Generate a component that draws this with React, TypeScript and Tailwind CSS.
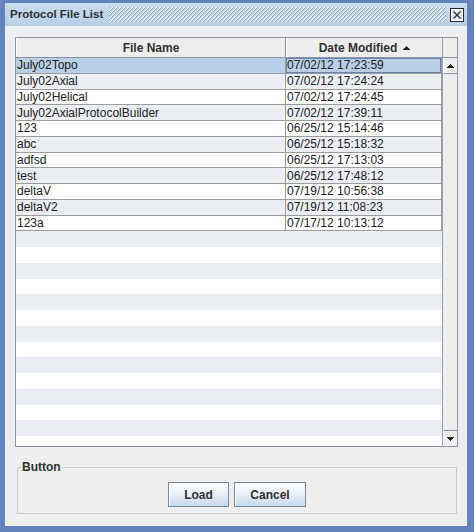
import React from "react";

const rows: [string, string][] = [
  ["July02Topo", "07/02/12 17:23:59"],
  ["July02Axial", "07/02/12 17:24:24"],
  ["July02Helical", "07/02/12 17:24:45"],
  ["July02AxialProtocolBuilder", "07/02/12 17:39:11"],
  ["123", "06/25/12 15:14:46"],
  ["abc", "06/25/12 15:18:32"],
  ["adfsd", "06/25/12 17:13:03"],
  ["test", "06/25/12 17:48:12"],
  ["deltaV", "07/19/12 10:56:38"],
  ["deltaV2", "07/19/12 11:08:23"],
  ["123a", "07/17/12 10:13:12"],
];

const stripes = Array.from({ length: 14 }, (_, k) => k + rows.length);

function Bumps() {
  return (
    <svg className="flex-1 ml-[6px] h-[15px]" shapeRendering="crispEdges">
      <defs>
        <pattern id="bumps" width="4" height="4" patternUnits="userSpaceOnUse">
          <rect x="0" y="3" width="1" height="1" fill="#ffffff" />
          <rect x="1" y="2" width="1" height="1" fill="#ffffff" />
          <rect x="2" y="1" width="1" height="1" fill="#ffffff" />
          <rect x="3" y="0" width="1" height="1" fill="#ffffff" />
          <rect x="0" y="0" width="1" height="1" fill="#8ea8cc" />
          <rect x="1" y="3" width="1" height="1" fill="#8ea8cc" />
          <rect x="2" y="2" width="1" height="1" fill="#8ea8cc" />
          <rect x="3" y="1" width="1" height="1" fill="#8ea8cc" />
        </pattern>
      </defs>
      <rect width="100%" height="100%" fill="url(#bumps)" />
    </svg>
  );
}

function CloseBtn() {
  return (
    <svg width="14" height="14" viewBox="0 0 14 14" className="ml-[4px] mr-[3px] shrink-0">
      <rect x="0.5" y="0.5" width="13" height="13" fill="#dfe8f2" stroke="#2b2b2b" />
      <rect x="1.5" y="1.5" width="11" height="11" fill="none" stroke="#ffffff" />
      <path d="M3.5 3.5 L10.5 10.5 M10.5 3.5 L3.5 10.5" stroke="#333333" strokeWidth="1.4" />
    </svg>
  );
}

function UpTri() {
  return (
    <svg width="7" height="4" viewBox="0 0 7 4" shapeRendering="crispEdges">
      <polygon points="0,4 3.5,0 7,4" fill="#222222" />
    </svg>
  );
}

function DownTri() {
  return (
    <svg width="7" height="4" viewBox="0 0 7 4" shapeRendering="crispEdges">
      <polygon points="0,0 7,0 3.5,4" fill="#222222" />
    </svg>
  );
}

export default function App() {
  return (
    <div className="w-[474px] h-[532px] bg-[#6382bf] pt-[3px] pl-[5px] pr-[7px] pb-[6px] flex flex-col overflow-hidden font-['Liberation_Sans',Arial,sans-serif]">
      {/* title bar */}
      <div className="h-[24px] shrink-0 flex items-center bg-linear-to-b from-[#c9dbee] to-[#b8cfe5] border-b border-[#e9f0f8]">
        <span className="pl-[5px] text-[11.5px] font-bold text-[#333333] leading-none whitespace-nowrap">
          Protocol File List
        </span>
        <Bumps />
        <CloseBtn />
      </div>

      {/* content */}
      <div className="flex-1 bg-[#eeeeee] flex flex-col pt-[10px]">
        {/* scroll pane */}
        <div className="ml-[10px] w-[443px] h-[410px] shrink-0 border border-[#8a96a3] flex bg-white">
          <div className="w-[426px] flex flex-col">
            {/* header */}
            <div className="h-[20px] shrink-0 flex border-b border-[#8a96a3] bg-[#eeeeee] text-[12px] font-bold text-[#333333]">
              <div className="w-[270px] border-r border-[#8a96a3] flex items-center justify-center border-l border-l-white">
                File Name
              </div>
              <div className="flex-1 flex items-center justify-center gap-[6px] border-l border-l-white">
                <span>Date Modified</span>
                <UpTri />
              </div>
            </div>
            {/* data rows */}
            {rows.map((r, i) => (
              <div
                key={i}
                className={
                  i === 0
                    ? "flex h-[15.75px] shrink-0 bg-[#b8cfe5]"
                    : i % 2 === 1
                    ? "flex h-[15.75px] shrink-0 bg-[#ebeef3]"
                    : "flex h-[15.75px] shrink-0 bg-white"
                }
              >
                <div className="w-[270px] border-r border-b border-[#9c9c9c] pl-[1px] text-[12px] leading-[14px] text-[#222222] flex items-center whitespace-nowrap">
                  {r[0]}
                </div>
                <div className="w-[156px] border-r border-b border-[#9c9c9c] text-[12px] leading-[14px] text-[#222222] flex whitespace-nowrap">
                  {i === 0 ? (
                    <div className="flex-1 border border-[#6a83ab] flex items-center">{r[1]}</div>
                  ) : (
                    <div className="flex-1 pl-[1px] flex items-center">{r[1]}</div>
                  )}
                </div>
              </div>
            ))}
            {/* empty stripes */}
            <div className="flex-1 flex flex-col overflow-hidden">
              {stripes.map((k) => (
                <div
                  key={k}
                  className={k % 2 === 1 ? "h-[15.75px] shrink-0 bg-[#ebeef3]" : "h-[15.75px] shrink-0 bg-white"}
                />
              ))}
            </div>
          </div>
          {/* scrollbar */}
          <div className="flex-1 flex flex-col border-l border-[#9aa3ad] bg-[#eeeeee]">
            <div className="h-[20px] shrink-0 border-b border-[#8a96a3]" />
            <div className="h-[16px] shrink-0 border-b border-[#8a96a3] flex items-center justify-center border-l border-l-white">
              <UpTri />
            </div>
            <div className="flex-1" />
            <div className="h-[16px] shrink-0 border-t border-[#8a96a3] flex items-center justify-center border-l border-l-white">
              <DownTri />
            </div>
          </div>
        </div>

        {/* button group */}
        <fieldset className="ml-[12px] mt-[13px] w-[440px] border border-[#c4ccd6] pb-[6px]">
          <legend className="ml-[3px] px-[1px] text-[12px] leading-[14px] font-bold text-[#333333]">Button</legend>
          <div className="flex justify-center gap-[5px] pt-[8px]">
            <button className="w-[61px] h-[25px] border border-[#7a8a99] bg-linear-to-b from-white via-[#e8eff7] to-[#c6d8ea] text-[12px] font-bold text-[#333333] shadow-[inset_1px_1px_0_#ffffff]">
              Load
            </button>
            <button className="w-[72px] h-[25px] border border-[#7a8a99] bg-linear-to-b from-white via-[#e8eff7] to-[#c6d8ea] text-[12px] font-bold text-[#333333] shadow-[inset_1px_1px_0_#ffffff]">
              Cancel
            </button>
          </div>
        </fieldset>
      </div>
    </div>
  );
}
